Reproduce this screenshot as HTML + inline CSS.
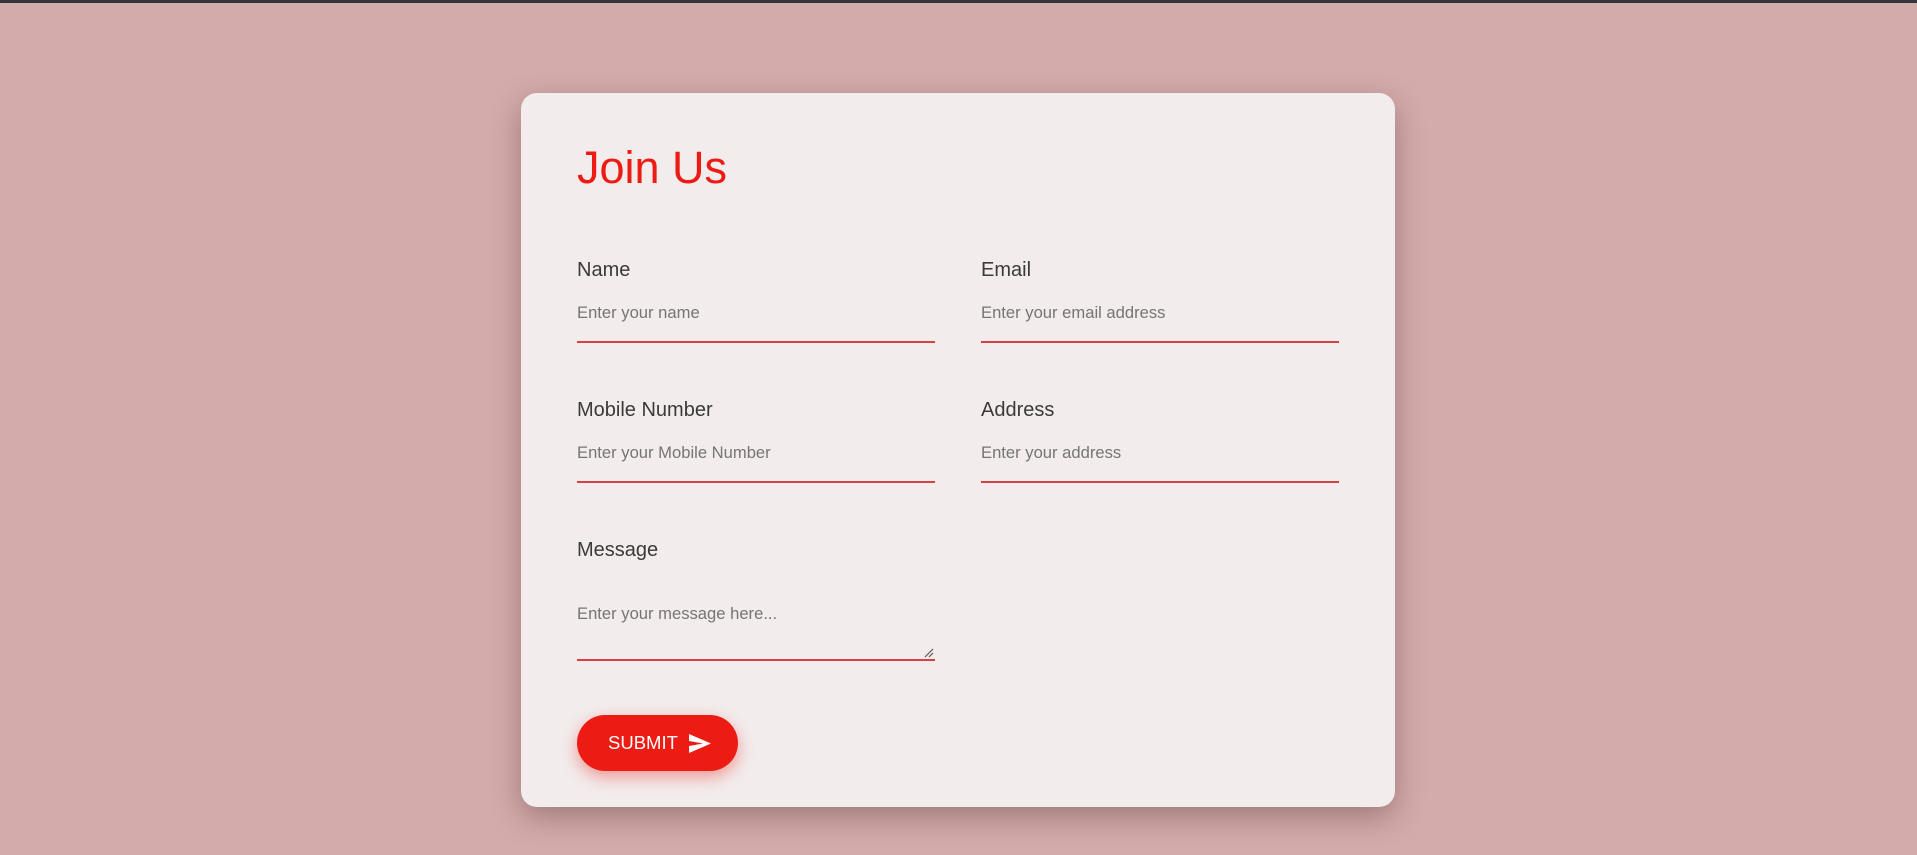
<!DOCTYPE html>
<html><head><meta charset="utf-8"><style>
html,body{margin:0;padding:0;}
body{width:1917px;height:855px;background:#d4abab;position:relative;overflow:hidden;font-family:"Liberation Sans",Arial,sans-serif;}
.top{position:absolute;left:0;top:0;width:1917px;height:3px;background:#35363a;}
.card{position:absolute;left:521px;top:93px;width:874px;height:714px;background:#f2ecec;border-radius:16px;box-shadow:0 10px 30px rgba(60,30,30,0.35);}
.t{position:absolute;white-space:nowrap;}
h1{position:absolute;margin:0;left:56px;top:52px;font-size:45px;font-weight:normal;color:#ec1c14;line-height:1;}
.lbl{font-size:20px;color:#3a3a3a;line-height:1;}
.ph{font-size:16.6px;color:#757575;line-height:1;}
.line{position:absolute;height:1.5px;background:#d94040;width:358px;}
.btn{position:absolute;left:56px;top:622px;width:161px;height:56px;border-radius:28px;background:#ec1c14;box-shadow:0 6px 16px rgba(236,28,20,0.4);}
</style></head><body>
<div class="top"></div>
<div class="card">
<h1>Join Us</h1>
<div class="t lbl" style="left:56px;top:167px">Name</div>
<div class="t lbl" style="left:460px;top:167px">Email</div>
<div class="t ph" style="left:56px;top:212px">Enter your name</div>
<div class="t ph" style="left:460px;top:212px">Enter your email address</div>
<div class="line" style="left:56px;top:248px"></div>
<div class="line" style="left:460px;top:248px"></div>
<div class="t lbl" style="left:56px;top:307px">Mobile Number</div>
<div class="t lbl" style="left:460px;top:307px">Address</div>
<div class="t ph" style="left:56px;top:352px">Enter your Mobile Number</div>
<div class="t ph" style="left:460px;top:352px">Enter your address</div>
<div class="line" style="left:56px;top:388px"></div>
<div class="line" style="left:460px;top:388px"></div>
<div class="t lbl" style="left:56px;top:447px">Message</div>
<div class="t ph" style="left:56px;top:513px">Enter your message here...</div>
<svg style="position:absolute;left:403px;top:555px" width="10" height="10"><path d="M1 9L9 1M5 9L9 5" stroke="#555" stroke-width="1.2"/></svg>
<div class="line" style="left:56px;top:566px"></div>
<div class="btn">
<div class="t" style="left:31px;top:19px;font-size:18.5px;color:#fff;line-height:1">SUBMIT</div>
<svg style="position:absolute;left:112px;top:19px" width="22" height="19" viewBox="0 0 22 19"><path d="M0 0L22 9.5L0 19L0 12L14 9.5L0 7Z" fill="#fff"/></svg>
</div>
</div>
</body></html>
